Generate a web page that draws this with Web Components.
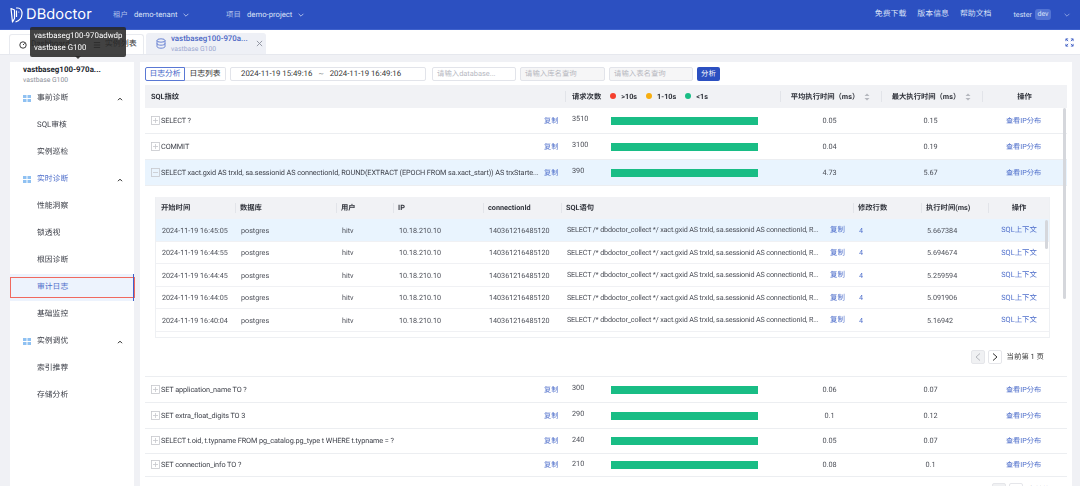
<!DOCTYPE html>
<html lang="zh">
<head>
<meta charset="utf-8">
<title>DBdoctor</title>
<style>
  html, body { margin: 0; height: 486px; overflow: hidden; }
  body {
    background: #f0f1f5;
    color: #3a3d45;
    font: 8px/1.3 Roboto, "Noto Sans CJK SC", sans-serif;
    text-rendering: geometricPrecision;
    filter: blur(.3px);
  }
  .page { display: grid; grid-template-columns: 124px 932px; column-gap: 6px; padding: 7px 0 0 10px; height: 425px; }
</style>
</head>
<body>
<app-header></app-header>
<tab-bar></tab-bar>
<div class="page">
  <side-nav></side-nav>
  <main-panel></main-panel>
</div>
<instance-tip></instance-tip>

<script>
const BLUE = '#2c50c1';
const LINK = '#4f6fcb';

const chevron = (color, size) => `<svg width="${size}" height="${size}" viewBox="0 0 10 10" fill="none" stroke="${color}" stroke-width="1"><path d="M2 3.5 5 6.5 8 3.5"/></svg>`;

// 顶部导航
class AppHeader extends HTMLElement {
  constructor() {
    super();
    this.attachShadow({ mode: 'open' });
    this.shadowRoot.innerHTML = `
      <style>
        :host { display: flex; align-items: center; height: 29px; background: ${BLUE}; border-bottom: 1px solid #3f62cc; color: #d9e1f7; font-size: 7.7px; }
        .logo { display: flex; align-items: center; gap: 3px; margin-left: 10px; width: 103px; }
        .logo b { font: 400 14.6px/1 "Inter", "Open Sans", sans-serif; color: #fff; letter-spacing: .1px; }
        .item { display: flex; align-items: center; white-space: nowrap; }
        .label { opacity: .75; width: 21px; font-size: 7.4px; }
        .tenant { width: 113px; }
        .tenant svg { margin-left: 5px; }
        .right { margin-left: auto; display: flex; align-items: center; font-size: 7.9px; }
        .right a { margin-right: 11px; }
        .user { display: flex; align-items: center; gap: 3px; margin-left: 11px; margin-right: 12px; font-size: 7.2px; }
        .dev { background: #5273d3; border-radius: 3px; padding: 0 2.5px; font-size: 7px; line-height: 11px; }
        .right svg { margin-right: 9px; }
      </style>
      <div class="logo">
        <svg width="13" height="16" viewBox="0 0 13 16" fill="none" stroke="#fff" stroke-width="1.2" stroke-linejoin="round">
          <path d="M1 1.5 4.5 3v8.5L2.5 15 1.6 7Z"/>
          <path d="M6 1h1.8c2.8 0 4.4 2.6 4.2 6-.2 3.6-2.6 6.7-6.5 8"/>
          <path d="M6.5 3.5v6.5"/>
          <circle cx="8.8" cy="5" r=".6" fill="#fff" stroke="none"/>
        </svg>
        <b>DBdoctor</b>
      </div>
      <div class="item tenant"><span class="label">租户</span><span>demo-tenant</span>${chevron('#c9d4f3', 8)}</div>
      <div class="item tenant"><span class="label">项目</span><span>demo-project</span>${chevron('#c9d4f3', 8)}</div>
      <div class="right">
        <a>免费下载</a><a>版本信息</a><a>帮助文档</a>
        <div class="user"><span>tester</span><span class="dev">dev</span></div>
        ${chevron('#9db0e6', 8)}
      </div>`;
  }
}

// 标签栏
class TabBar extends HTMLElement {
  constructor() {
    super();
    this.attachShadow({ mode: 'open' });
    this.shadowRoot.innerHTML = `
      <style>
        :host { display: flex; align-items: flex-end; height: 24px; padding-left: 9px; background: #fff; border-bottom: 1px solid #e6e8ee; font-size: 8px; color: #333; white-space: nowrap; }
        .tab { display: flex; align-items: center; height: 20px; border: 1px solid #e8eaef; border-bottom: 0; border-radius: 3px 3px 0 0; box-sizing: border-box; }
        .plain { width: 135px; padding-left: 9px; gap: 4px; }
        .plain .sp { width: 15px; }
        .active { width: 120px; height: 21px; margin-left: 2px; padding-left: 10px; gap: 5px; background: #eef0f6; border: 0; }
        .active .t { display: flex; flex-direction: column; width: 80px; line-height: 10px; }
        .active b { font-weight: 500; color: #4b67c5; font-size: 7.9px; }
        .active small { font-size: 6.8px; color: #9aa7d0; }
        .full { margin-left: auto; margin-right: 6px; align-self: center; }
      </style>
      <div class="tab plain">
        <svg width="8" height="8" viewBox="0 0 10 10" fill="none" stroke="#333" stroke-width="1.2"><circle cx="5" cy="5" r="4"/><path d="M5 5 7 3"/></svg>
        <span>Dashboard</span><span class="sp"></span>
        <svg width="8" height="8" viewBox="0 0 10 10" stroke="#333" stroke-width="1.1"><path d="M1 2h8M1 5h8M1 8h8"/></svg>
        <span>实例列表</span>
      </div>
      <div class="tab active">
        <svg width="10" height="11" viewBox="0 0 10 11" fill="none" stroke="#5d78cf" stroke-width=".9"><ellipse cx="5" cy="2.5" rx="4" ry="1.7"/><path d="M1 2.5v6c0 1 1.8 1.7 4 1.7s4-.7 4-1.7v-6M1 5.5c0 1 1.8 1.7 4 1.7s4-.7 4-1.7"/></svg>
        <span class="t"><b>vastbaseg100-970a...</b><small>vastbase G100</small></span>
        <svg width="7" height="7" viewBox="0 0 8 8" stroke="#8a8f9c" stroke-width="1"><path d="M1 1 7 7M7 1 1 7"/></svg>
      </div>
      <svg class="full" width="9" height="9" viewBox="0 0 10 10" fill="none" stroke="#3f5fc4" stroke-width="1"><path d="M1 3.5V1h2.5M9 3.5V1H6.5M1 6.5V9h2.5M9 6.5V9H6.5M1 1l2.5 2.5M9 1 6.5 3.5M1 9l2.5-2.5M9 9 6.5 6.5"/></svg>`;
  }
}

// 左侧菜单
const MENU = [
  { group: '事前诊断', items: ['SQL审核', '实例巡检'] },
  { group: '实时诊断', on: true, items: ['性能洞察', '锁透视', '根因诊断', '审计日志', '基础监控'] },
  { group: '实例调优', items: ['索引推荐', '存储分析'] }
];

class SideNav extends HTMLElement {
  constructor() {
    super();
    this.attachShadow({ mode: 'open' });
    const grid = `<svg width="8" height="7" viewBox="0 0 8 7" fill="#8fc1f2"><rect width="3.5" height="3"/><rect x="4.5" width="3.5" height="3"/><rect y="4" width="3.5" height="3"/><rect x="4.5" y="4" width="3.5" height="3"/></svg>`;
    const up = `<svg width="6" height="4" viewBox="0 0 6 4" fill="none" stroke="#222" stroke-width="1"><path d="M1 3.2 3 1.2 5 3.2"/></svg>`;
    const rows = MENU.map(g => `
      <div class="row group ${g.on ? 'on' : ''}">${grid}<span>${g.group}</span><i>${up}</i></div>
      ${g.items.map(n => `<div class="row ${n === '审计日志' ? 'sel' : ''}"><span>${n}</span></div>`).join('')}`).join('');
    this.shadowRoot.innerHTML = `
      <style>
        :host { display: block; background: #fff; font-size: 7.8px; color: #3c3f48; }
        .head { padding: 3px 0 0 13px; height: 20px; line-height: 10px; white-space: nowrap; }
        .head b { display: block; font-weight: 700; color: #23262e; font-size: 7.9px; }
        .head small { color: #8b8f99; font-size: 6.8px; }
        .row { position: relative; display: flex; align-items: center; height: 27px; padding-left: 27px; box-sizing: border-box; }
        .group { padding-left: 13px; gap: 6px; }
        .group i { margin-left: auto; margin-right: 11px; display: flex; }
        .group.on span { color: #4f6fcb; }
        .sel { background: #edf3fd; color: #4f6fcb; }
        .sel::after { content: ""; position: absolute; right: 0; top: 0; bottom: 0; width: 1px; background: #4060c8; }
        .sel::before { content: ""; position: absolute; inset: 3px -1px 3px 0; border: 1px solid #f0695f; }
      </style>
      <div class="head"><b>vastbaseg100-970a...</b><small>vastbase G100</small></div>
      ${rows}`;
  }
}

// 筛选栏
class QueryBar extends HTMLElement {
  constructor() {
    super();
    this.attachShadow({ mode: 'open' });
    this.shadowRoot.innerHTML = `
      <style>
        :host { display: flex; align-items: center; height: 14px; gap: 4px; font-size: 7.8px; color: #333; white-space: nowrap; }
        .seg { display: flex; }
        .seg span { display: flex; align-items: center; justify-content: center; width: 40px; height: 14px; box-sizing: border-box; border: 1px solid #e2e4ea; }
        .seg .on { border-color: #5a78d4; color: #4464c8; border-radius: 2px 0 0 2px; }
        .seg span:last-child { width: 41px; border-left: 0; border-radius: 0 2px 2px 0; }
        .date { display: flex; align-items: center; width: 196px; height: 14px; box-sizing: border-box; padding-left: 10px; gap: 6px; border: 1px solid #e2e4ea; border-radius: 2px; }
        .date i { color: #999; font-style: normal; }
        .in { width: 84px; height: 14px; box-sizing: border-box; padding-left: 4px; border: 1px solid #e2e4ea; border-radius: 2px; color: #b6b8bf; line-height: 12px; font-size: 7.4px; }
        .in.off { background: #f6f6f7; }
        .btn { width: 23px; height: 14px; background: ${BLUE}; color: #fff; border-radius: 2px; text-align: center; line-height: 14px; font-size: 7.4px; }
      </style>
      <div class="seg"><span class="on">日志分析</span><span>日志列表</span></div>
      <div class="date"><span>2024-11-19 15:49:16</span><i>~</i><span>2024-11-19 16:49:16</span></div>
      <div class="in" style="margin-left:2px">请输入database...</div>
      <div class="in off" style="width:85px">请输入库名查询</div>
      <div class="in off" style="width:84px">请输入表名查询</div>
      <div class="btn">分析</div>`;
  }
}

const sorter = `<svg width="6" height="8" viewBox="0 0 6 8" fill="#b4b7be"><path d="M3 .5 5.5 3H.5ZM3 7.5 .5 5h5Z"/></svg>`;

// 内层日志表
const LOG_ROWS = [
  ['2024-11-19 16:45:05', '5.667384'],
  ['2024-11-19 16:44:55', '5.694674'],
  ['2024-11-19 16:44:45', '5.259594'],
  ['2024-11-19 16:44:05', '5.091906'],
  ['2024-11-19 16:40:04', '5.16942']
];
const LOG_SQL = 'SELECT /* dbdoctor_collect */ xact.gxid AS trxId, sa.sessionid AS connectionId, R...';

class LogTable extends HTMLElement {
  constructor() {
    super();
    this.attachShadow({ mode: 'open' });
    const cols = 'grid-template-columns: 79px 101px 57px 90px 78px 292px 68px 67px 62px;';
    const rows = LOG_ROWS.map((r, i) => `
      <div class="r ${i === 0 ? 'hi' : ''}" style="${cols}">
        <span>${r[0]}</span><span>postgres</span><span>hitv</span><span>10.18.210.10</span><span>140361216485120</span>
        <span class="sql"><em>${LOG_SQL}</em><a>复制</a></span>
        <span class="n">4</span><span>${r[1]}</span><span class="c"><a>SQL上下文</a></span>
      </div>`).join('');
    this.shadowRoot.innerHTML = `
      <style>
        :host { position: relative; display: block; border: 1px solid #eef0f3; border-top: 0; margin-left: -1px; color: #4b4e57; font-size: 7.2px; white-space: nowrap; }
        .h, .r { display: grid; align-items: center; }
        .h { height: 22px; background: #f1f2f5; font-weight: 700; color: #33363e; font-size: 7.3px; }
        .h span { padding-left: 5px; height: 22px; line-height: 22px; position: relative; }
        .h span + span::before { content: ""; position: absolute; left: 0; top: 6px; bottom: 6px; width: 1px; background: #e2e4e9; }
        .h .c { padding-left: 0; }
        .c { text-align: center; }
        .r { height: 22.5px; border-bottom: 1px solid #f0f1f4; box-sizing: border-box; padding-top: 1px; }
        .r span { padding-left: 6px; overflow: hidden; }
        .r span.c { padding-left: 0; }
        .r span.n { color: #4f6fcb; }
        .hi { background: #e9f4fe; }
        .sql { display: flex; gap: 1px; }
        .sql em { font-style: normal; width: 262px; overflow: hidden; letter-spacing: -.15px; }
        a { color: ${LINK}; font-size: 7.4px; }
        .foot { height: 5px; }
        .bar { position: absolute; right: 1px; top: 23px; width: 3px; height: 29px; background: #d5d7dc; border-radius: 2px; }
      </style>
      <div class="h" style="${cols}">
        <span>开始时间</span><span>数据库</span><span>用户</span><span>IP</span><span>connectionId</span><span>SQL语句</span><span>修改行数</span><span>执行时间(ms)</span><span class="c">操作</span>
      </div>
      ${rows}
      <div class="foot"></div>
      <div class="bar"></div>`;
  }
}

// 分页
class PagerBar extends HTMLElement {
  constructor() {
    super();
    this.attachShadow({ mode: 'open' });
    this.shadowRoot.innerHTML = `
      <style>
        :host { display: flex; align-items: center; justify-content: flex-end; gap: 3px; font-size: 7.4px; color: #333; white-space: nowrap; }
        b { display: flex; align-items: center; justify-content: center; width: 14px; height: 14px; box-sizing: border-box; border: 1px solid #e5e6ea; border-radius: 2px; }
        b.off { background: #f0f1f3; }
        span { margin-left: 2px; }
      </style>
      <b class="off"><svg width="6" height="8" viewBox="0 0 6 8" fill="none" stroke="#b5b7bd"><path d="M5 .5 1 4l4 3.5"/></svg></b>
      <b><svg width="6" height="8" viewBox="0 0 6 8" fill="none" stroke="#333"><path d="M1 .5 5 4 1 7.5"/></svg></b>
      <span>当前第 1 页</span>`;
  }
}

// 外层 SQL 指纹行
class SqlRow extends HTMLElement {
  constructor() {
    super();
    this.attachShadow({ mode: 'open' });
  }
  connectedCallback() {
    const open = this.hasAttribute('open');
    const get = n => this.getAttribute(n);
    const sign = open ? '<path d="M2 4.5h5"/>' : '<path d="M2 4.5h5M4.5 2v5"/>';
    this.shadowRoot.innerHTML = `
      <style>
        :host { display: grid; grid-template-columns: 420px 215px 101px 101px 85px; align-items: center; height: ${get('h') || 26}px; box-sizing: border-box; border-bottom: 1px solid #eceef1; font-size: 7.3px; color: #4a4d56; white-space: nowrap; }
        :host([open]) { background: #e9f4fe; }
        .sql { display: flex; align-items: center; padding-left: 6px; gap: 1px; }
        .sql svg { flex: none; }
        .sql em { font-style: normal; width: 382px; overflow: hidden; color: #3f424b; letter-spacing: -.1px; }
        a { color: ${LINK}; font-size: 7.2px; }
        .num { display: flex; align-items: center; padding-left: 7px; }
        .num span { width: 39px; margin-top: -3px; }
        .num i { width: 147px; height: 8px; background: #19bd85; }
        .c { text-align: center; padding-right: 2px; }
      </style>
      <div class="sql">
        <svg width="9" height="9" viewBox="0 0 9 9" fill="none" stroke="#c6c8cd" stroke-width=".8"><rect x=".5" y=".5" width="8" height="8"/>${sign}</svg>
        <em>${get('sql')}</em><a>复制</a>
      </div>
      <div class="num"><span>${get('count')}</span><i></i></div>
      <div class="c">${get('avg')}</div>
      <div class="c">${get('max')}</div>
      <div class="c"><a>查看IP分布</a></div>`;
  }
}

// 主面板
class MainPanel extends HTMLElement {
  constructor() {
    super();
    this.attachShadow({ mode: 'open' });
    const dot = c => `<i style="background:${c}"></i>`;
    this.shadowRoot.innerHTML = `
      <style>
        :host { display: block; padding: 5px 5px 0; background: #fff; overflow: hidden; position: relative; }
        query-bar { margin-bottom: 4px; }
        .th { display: grid; grid-template-columns: 420px 215px 101px 101px 85px; align-items: center; height: 23px; background: #f1f2f5; font-size: 7.3px; font-weight: 700; color: #2f323a; white-space: nowrap; }
        .th > div { position: relative; display: flex; align-items: center; height: 23px; }
        .th > div + div::before { content: ""; position: absolute; left: 0; top: 6px; bottom: 6px; width: 1px; background: #e2e4e9; }
        .th .mid { justify-content: center; gap: 5px; }
        .th .first { padding-left: 6px; }
        .legend { padding-left: 7px; gap: 9px; }
        .legend span { display: flex; align-items: center; gap: 5px; }
        .legend i { width: 6px; height: 6px; border-radius: 50%; }
        .detail { height: 191px; box-sizing: border-box; padding: 11px 17px 0 11px; border-bottom: 1px solid #eceef1; }
        .detail pager-bar { margin: 12px 6px 0 0; }
        .bar { position: absolute; right: 6px; top: 46px; width: 3px; height: 191px; background: #d5d7dc; border-radius: 2px; }
        .bottom { position: absolute; right: 7px; top: 421px; }
      </style>
      <query-bar></query-bar>
      <div class="th">
        <div class="first">SQL指纹</div>
        <div class="legend"><span>请求次数</span><span>${dot('#f5402f')}&gt;10s</span><span>${dot('#f7ae10')}1-10s</span><span>${dot('#19bd85')}&lt;1s</span></div>
        <div class="mid">平均执行时间（ms）${sorter}</div>
        <div class="mid">最大执行时间（ms）${sorter}</div>
        <div class="mid">操作</div>
      </div>
      <sql-row sql="SELECT ?" count="3510" avg="0.05" max="0.15"></sql-row>
      <sql-row sql="COMMIT" count="3100" avg="0.04" max="0.19"></sql-row>
      <sql-row open sql="SELECT xact.gxid AS trxId, sa.sessionid AS connectionId, ROUND(EXTRACT (EPOCH FROM sa.xact_start)) AS trxStarte..." count="390" avg="4.73" max="5.67"></sql-row>
      <div class="detail">
        <log-table></log-table>
        <pager-bar></pager-bar>
      </div>
      <sql-row sql="SET application_name TO ?" count="300" avg="0.06" max="0.07"></sql-row>
      <sql-row sql="SET extra_float_digits TO 3" count="290" avg="0.1" max="0.12"></sql-row>
      <sql-row sql="SELECT t.oid, t.typname FROM pg_catalog.pg_type t WHERE t.typname = ?" count="240" avg="0.05" max="0.07" h="25"></sql-row>
      <sql-row sql="SET connection_info TO ?" count="210" avg="0.08" max="0.1" h="23"></sql-row>
      <div class="bar"></div>
      <pager-bar class="bottom"></pager-bar>`;
  }
}

// 悬浮提示
class InstanceTip extends HTMLElement {
  constructor() {
    super();
    this.attachShadow({ mode: 'open' });
    this.shadowRoot.innerHTML = `
      <style>
        :host { position: absolute; left: 30px; top: 27px; width: 96px; height: 30px; box-sizing: border-box; padding: 3px 4px; background: rgba(40,40,40,.88); border-radius: 2px; color: #fff; font-size: 7.9px; line-height: 12px; white-space: nowrap; }
        :host::after { content: ""; position: absolute; left: 45px; bottom: -2px; border: 3px solid transparent; border-top-color: rgba(40,40,40,.88); border-bottom: 0; }
      </style>
      <div>vastbaseg100-970adwdp</div>
      <div>vastbase G100</div>`;
  }
}

customElements.define('app-header', AppHeader);
customElements.define('tab-bar', TabBar);
customElements.define('side-nav', SideNav);
customElements.define('query-bar', QueryBar);
customElements.define('log-table', LogTable);
customElements.define('pager-bar', PagerBar);
customElements.define('sql-row', SqlRow);
customElements.define('main-panel', MainPanel);
customElements.define('instance-tip', InstanceTip);
</script>
</body>
</html>
